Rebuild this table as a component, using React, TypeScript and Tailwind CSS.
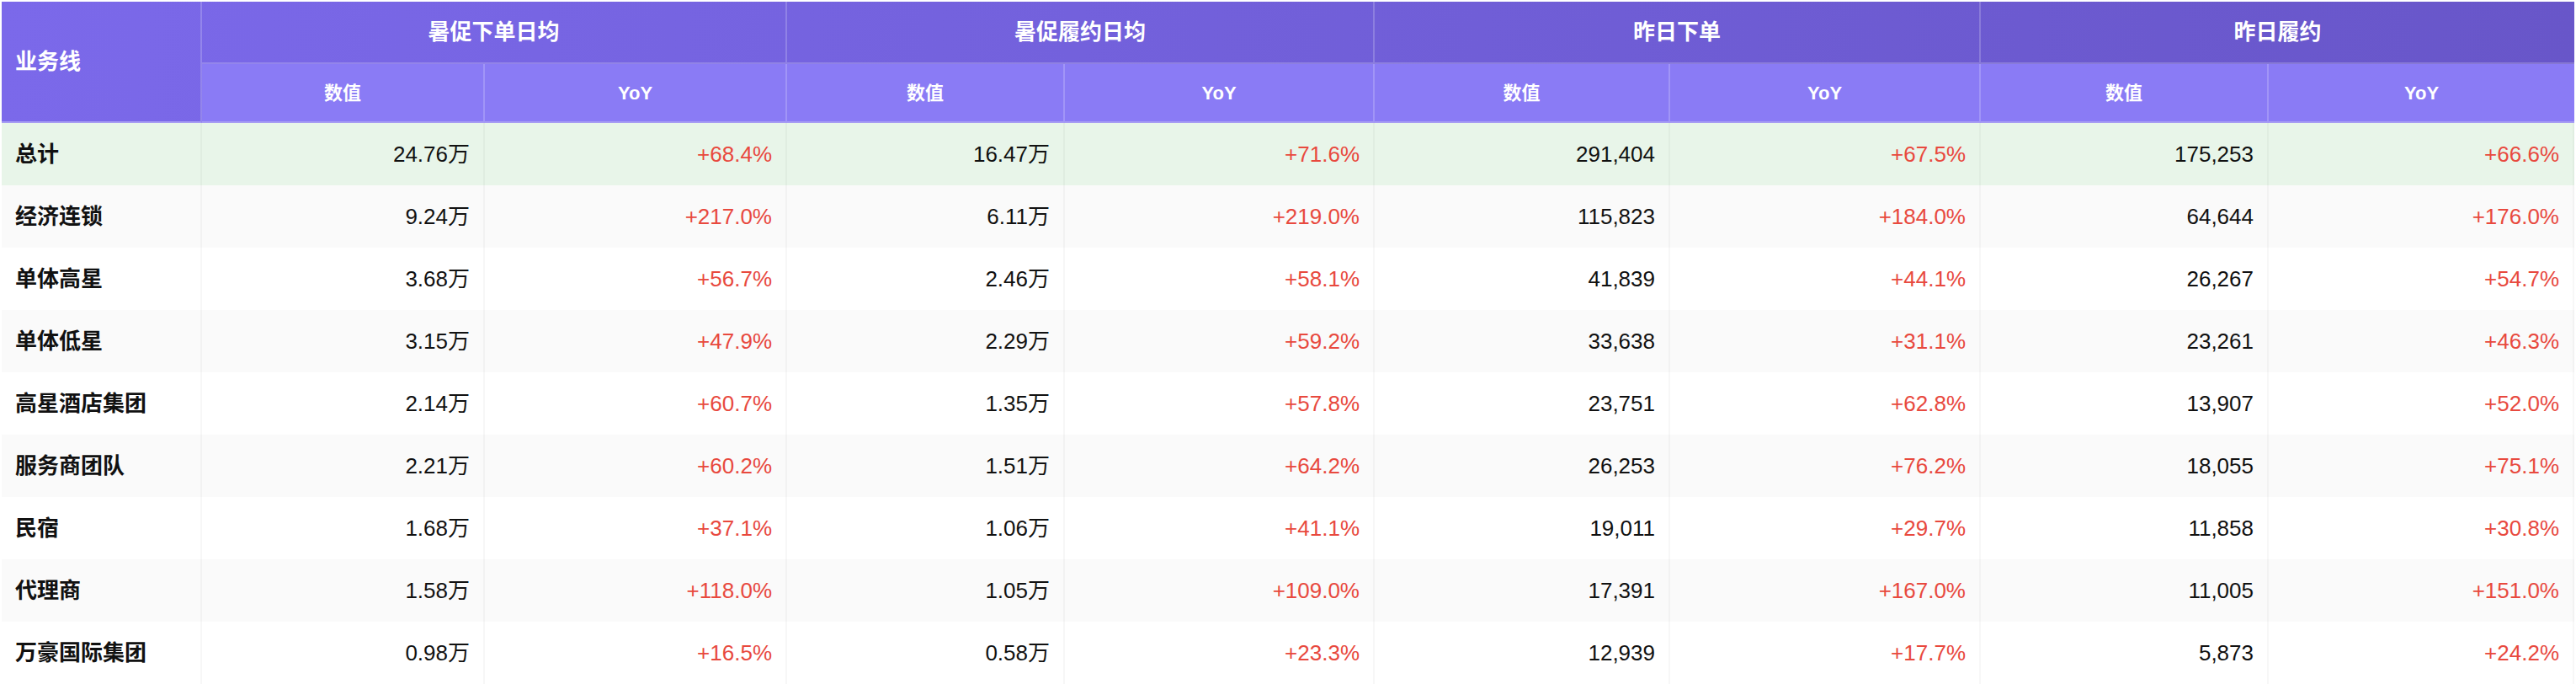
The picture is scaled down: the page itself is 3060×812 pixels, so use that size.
const font = { fontFamily: '"Liberation Sans", "Noto Sans CJK SC", sans-serif' }

type Row = { name: string; cells: string[]; bg: string }

const rows: Row[] = [
  { name: "总计", cells: ["24.76万", "+68.4%", "16.47万", "+71.6%", "291,404", "+67.5%", "175,253", "+66.6%"], bg: "bg-[#e8f5e9]" },
  { name: "经济连锁", cells: ["9.24万", "+217.0%", "6.11万", "+219.0%", "115,823", "+184.0%", "64,644", "+176.0%"], bg: "bg-[#fafafa]" },
  { name: "单体高星", cells: ["3.68万", "+56.7%", "2.46万", "+58.1%", "41,839", "+44.1%", "26,267", "+54.7%"], bg: "bg-white" },
  { name: "单体低星", cells: ["3.15万", "+47.9%", "2.29万", "+59.2%", "33,638", "+31.1%", "23,261", "+46.3%"], bg: "bg-[#fafafa]" },
  { name: "高星酒店集团", cells: ["2.14万", "+60.7%", "1.35万", "+57.8%", "23,751", "+62.8%", "13,907", "+52.0%"], bg: "bg-white" },
  { name: "服务商团队", cells: ["2.21万", "+60.2%", "1.51万", "+64.2%", "26,253", "+76.2%", "18,055", "+75.1%"], bg: "bg-[#fafafa]" },
  { name: "民宿", cells: ["1.68万", "+37.1%", "1.06万", "+41.1%", "19,011", "+29.7%", "11,858", "+30.8%"], bg: "bg-white" },
  { name: "代理商", cells: ["1.58万", "+118.0%", "1.05万", "+109.0%", "17,391", "+167.0%", "11,005", "+151.0%"], bg: "bg-[#fafafa]" },
  { name: "万豪国际集团", cells: ["0.98万", "+16.5%", "0.58万", "+23.3%", "12,939", "+17.7%", "5,873", "+24.2%"], bg: "bg-white" },
]

const groups = ["暑促下单日均", "暑促履约日均", "昨日下单", "昨日履约"]

const cols = "grid grid-cols-[238px_336px_359px_330px_368px_351px_369px_342px_363px]"

export default function App() {
  return (
    <div className="w-[3060px] bg-white p-[2px]" style={font}>
      {/* header */}
      <div className={`${cols} bg-linear-to-r from-[#7b69ea] to-[#6856c9] text-white font-bold`}>
        <div className="row-span-2 flex items-center px-4 text-[26px] border-r-2 border-white/20 border-b-2 border-b-[#a79cf3]">
          业务线
        </div>
        {groups.map((g, i) => (
          <div
            key={g}
            className={`col-span-2 h-[74px] flex items-center justify-center text-[26px] border-b-2 border-white/20 ${
              i < 3 ? "border-r-2" : ""
            }`}
          >
            {g}
          </div>
        ))}
        {groups.map((g, i) => (
          <div key={g + "-sub"} className="contents">
            <div className="h-[70px] flex items-center justify-center bg-[#8a7bf5] text-[22px] border-r-2 border-white/20 border-b-2 border-b-[#a79cf3]">
              数值
            </div>
            <div
              className={`h-[70px] flex items-center justify-center bg-[#8a7bf5] text-[22px] border-b-2 border-b-[#a79cf3] ${
                i < 3 ? "border-r-2 border-white/20" : ""
              }`}
            >
              YoY
            </div>
          </div>
        ))}
      </div>

      {/* body */}
      {rows.map((r) => (
        <div key={r.name} className={`${cols} ${r.bg}`}>
          <div className="h-[74px] flex items-center px-4 text-[26px] font-semibold text-[#111] border-r-2 border-black/[0.03]">
            {r.name}
          </div>
          {r.cells.map((c, j) => (
            <div
              key={j}
              className={`h-[74px] flex items-center justify-end pr-4 text-[26px] border-r-2 border-black/[0.03] ${
                j % 2 === 1 ? "text-[#e8493e]" : "text-[#111]"
              }`}
            >
              {c}
            </div>
          ))}
        </div>
      ))}
    </div>
  )
}
